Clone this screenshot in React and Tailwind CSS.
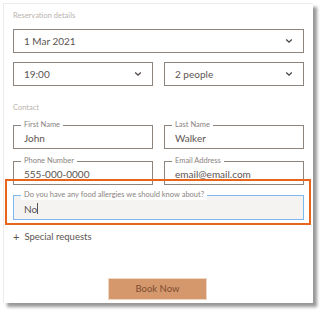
import React from 'react';

const font = { fontFamily: 'Lato, "Open Sans", sans-serif' };

function Chevron() {
  return (
    <svg width="8" height="6" viewBox="0 0 8 6" className="shrink-0">
      <path d="M1.2 1.6 L4 4.2 L6.8 1.6" fill="none" stroke="#4a4340" strokeWidth="1.3" />
    </svg>
  );
}

function Select({ value }) {
  return (
    <div className="h-[24px] border border-[#8d847d] flex items-center justify-between pl-[10px] pr-[10px] text-[10px] text-[#5b5451]">
      <span>{value}</span>
      <Chevron />
    </div>
  );
}

function Field({ label, value }) {
  return (
    <div className="relative h-[24px] border border-[#8d847d] flex items-end pl-[10px] pb-[4px] text-[10px] text-[#5b5451]">
      <span className="absolute left-[7px] top-[-6px] bg-white px-[3px] text-[7.5px] leading-[10px] text-[#8a8380]">{label}</span>
      <span className="leading-[12px]">{value}</span>
    </div>
  );
}

export default function App() {
  return (
    <div className="relative w-[321px] h-[311px] bg-white overflow-hidden" style={font}>
      <div className="pl-[3px] pt-[3px]">
        <div className="w-[310px] h-[300px] bg-white border-l border-t border-[#ececec] shadow-[4px_4px_3px_rgba(0,0,0,0.4)] px-[9px] pt-[7px]">
          <div className="text-[7.5px] leading-[10px] text-[#b9b3ae]">Reservation details</div>
          <div className="mt-[8px]"><Select value="1 Mar 2021" /></div>
          <div className="mt-[9px] grid grid-cols-2 gap-[11px]">
            <Select value="19:00" />
            <Select value="2 people" />
          </div>
          <div className="mt-[17px] text-[7.5px] leading-[10px] text-[#b9b3ae]">Contact</div>
          <div className="mt-[12px] grid grid-cols-2 gap-[11px]">
            <Field label="First Name" value="John" />
            <Field label="Last Name" value="Walker" />
          </div>
          <div className="mt-[12px] grid grid-cols-2 gap-[11px]">
            <Field label="Phone Number" value="555-000-0000" />
            <Field label="Email Address" value="email@email.com" />
          </div>
          <div className="relative mt-[10px] h-[25px] border border-[#7db9ef] bg-[#f4f3f1] flex items-end pl-[10px] pb-[4px] text-[10px] text-[#5b5451]">
            <span className="absolute left-[7px] top-[-6px] bg-white px-[3px] text-[7.5px] leading-[10px] text-[#8a8380]">Do you have any food allergies we should know about?</span>
            <span className="leading-[12px]">No</span>
            <span className="w-px h-[11px] bg-[#5b5451] mb-[1px]" />
          </div>
          <div className="mt-[11px] flex items-center gap-[5px] text-[9.5px] leading-[12px] text-[#5b5451]">
            <span className="text-[11px] leading-[12px]">+</span>
            <span>Special requests</span>
          </div>
          <div className="mt-[35px] ml-[95px] w-[99px] h-[22px] bg-[#d5976c] border border-[#f0d6c4] flex items-center justify-center text-[9.5px] text-[#7d4e32]">
            Book Now
          </div>
        </div>
      </div>
      <div className="absolute left-[5px] top-[179px] w-[306px] h-[46px] border-2 border-[#e8651d]" />
    </div>
  );
}
